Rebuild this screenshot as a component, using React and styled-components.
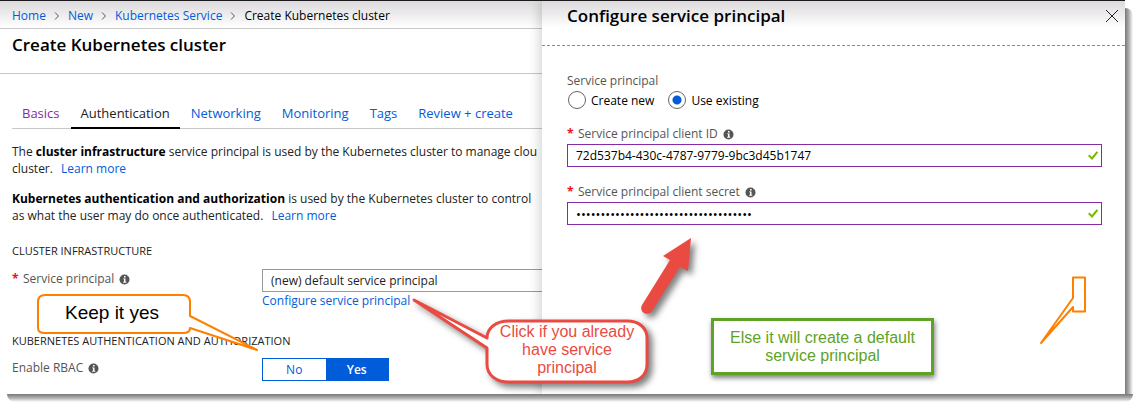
import React, { useState } from "react";
import styled, { createGlobalStyle } from "styled-components";

const Global = createGlobalStyle`
  * { box-sizing: border-box; }
  body { margin: 0; background: #fff; }
  body, button, input, select { font-family: "Open Sans", "Noto Sans", sans-serif; }
  p, h1, h2, h3, fieldset { margin: 0; padding: 0; border: 0; }
`;

const Frame = styled.div`
  position: relative;
  display: grid;
  grid-template-columns: 542fr 583fr;
  margin: 0 15px 15px 0;
  min-height: 394px;
  border-top: 1px solid #1b191b;
  background: #fff linear-gradient(#dcdadc, #fff 27px) no-repeat;
  font-size: 12px;
  color: #000;
  &::before, &::after {
    content: "";
    position: absolute;
  }
  &::before {
    left: 100%;
    top: 7px;
    bottom: 0;
    width: 8px;
    background: linear-gradient(90deg, #777, #b0b0b0 50%, #fff);
    border-radius: 0 8px 0 0;
  }
  &::after {
    top: 100%;
    left: 7px;
    right: -8px;
    height: 8px;
    background: linear-gradient(#777, #b0b0b0 50%, #fff);
    border-radius: 0 0 8px 8px;
  }
`;

const Main = styled.main`
  min-width: 0;
  overflow: hidden;
  white-space: nowrap;
`;

const Link = styled.a`
  color: #015cda;
  text-decoration: none;
`;

const Crumbs = styled.nav`
  display: flex;
  align-items: center;
  gap: 8px;
  height: 28px;
  padding: 1px 12px 0;
  border-bottom: 1px solid #c8c8c8;
  svg { margin-top: 1px; }
`;

const PageHead = styled.header`
  height: 45px;
  padding: 4px 12px;
  border-bottom: 1px solid #c8c8c8;
`;

const Title = styled.h1`
  font-size: 17px;
  line-height: 24px;
  font-weight: 600;
`;

const Tabs = styled.nav`
  display: flex;
  gap: 1px;
  margin: 26px 0 0 12px;
  border-bottom: 1px solid #c8c8c8;
`;

const Tab = styled.a`
  padding: 3px 10px 0;
  height: 29px;
  font-size: 13px;
  line-height: 20px;
  margin-bottom: -1px;
  text-decoration: none;
  color: ${(p) => (p.$state === "visited" ? "#852ba5" : p.$state === "active" ? "#222" : "#015cda")};
  border-bottom: 2px solid ${(p) => (p.$state === "active" ? "#000" : "transparent")};
`;

const Content = styled.div`
  padding: 14px 0 0 12px;
`;

const Para = styled.p`
  line-height: 17px;
  margin-bottom: 13px;
  color: #222;
  b { color: #000; }
  a { margin-left: 5px; }
`;

const Section = styled.h2`
  font-size: 11px;
  line-height: 16px;
  font-weight: 400;
  color: #222;
  margin-top: ${(p) => p.$gap || 0}px;
`;

const FormRow = styled.div`
  display: grid;
  grid-template-columns: 250px 1fr;
  margin-top: ${(p) => p.$gap}px;
`;

const Label = styled.label`
  display: flex;
  align-items: center;
  gap: 4px;
  height: 18px;
  color: #555;
  svg { margin: 2px 0 0 1px; }
`;

const Star = styled.span`
  width: 7px;
  font-weight: 700;
  color: #e81123;
`;

const PickerButton = styled.button`
  display: block;
  width: 100%;
  height: 23px;
  padding: 0 8px;
  border: 1px solid #999;
  border-right: 0;
  background: #fff;
  text-align: left;
  font-size: 12px;
  color: #222;
`;

const Toggle = styled.div`
  display: flex;
  width: 127px;
  height: 23px;
  border: 1px solid #015cda;
`;

const ToggleButton = styled.button`
  flex: 1;
  border: 0;
  padding: 0;
  font-size: 12px;
  font-weight: ${(p) => (p.$on ? 600 : 400)};
  color: ${(p) => (p.$on ? "#fff" : "#015cda")};
  background: ${(p) => (p.$on ? "#015cda" : "#fff")};
`;

const Blade = styled.aside`
  position: relative;
  min-width: 0;
  background: #fff linear-gradient(#dcdadc, #fff 27px) no-repeat;
  box-shadow: -3px 0 10px rgba(0, 0, 0, 0.16);
  clip-path: inset(0 0 0 -200px);
`;

const BladeHead = styled.header`
  display: flex;
  justify-content: space-between;
  align-items: flex-start;
  height: 45px;
  padding: 3px 7px 0 25px;
  border-bottom: 1px dashed #15b5e5;
`;

const CloseButton = styled.button`
  display: flex;
  margin-top: 6px;
  padding: 0;
  border: 0;
  background: none;
`;

const BladeForm = styled.form`
  padding: 26px 23px 0 25px;
`;

const Legend = styled.legend`
  padding: 0;
  line-height: 18px;
  color: #555;
`;

const Radios = styled.div`
  display: flex;
  gap: 13px;
`;

const RadioLabel = styled.label`
  display: flex;
  align-items: center;
  gap: 5px;
  height: 20px;
`;

const Radio = styled.input`
  appearance: none;
  width: 18px;
  height: 18px;
  margin: 0 0 0 1px;
  border: 1px solid #666;
  border-radius: 50%;
  background: #fff;
  &:checked { background: radial-gradient(circle, #015cda 4px, #fff 5px); }
`;

const Field = styled.div`
  margin-top: ${(p) => p.$gap}px;
`;

const InputBox = styled.div`
  display: flex;
  align-items: center;
  height: 23px;
  margin-top: 2px;
  padding: 0 3px 0 8px;
  border: 1px solid #852ba5;
  background: #fff;
`;

const TextInput = styled.input`
  flex: 1;
  min-width: 0;
  border: 0;
  padding: 0;
  outline: 0;
  background: none;
  font-size: ${(p) => (p.type === "password" ? 13 : 12)}px;
  color: #000;
`;

const Callout = styled.div`
  position: absolute;
  z-index: 2;
  left: ${(p) => p.$x}px;
  top: ${(p) => p.$y}px;
  width: ${(p) => p.$w}px;
  height: ${(p) => p.$h}px;
  pointer-events: none;
  svg { position: absolute; left: 0; top: 0; overflow: visible; }
`;

const RightCallout = styled(Callout)`
  left: auto;
  right: ${(p) => p.$right}px;
`;

const CalloutText = styled.p`
  position: absolute;
  left: ${(p) => p.$x}px;
  top: ${(p) => p.$y}px;
  width: ${(p) => p.$w}px;
  text-align: center;
  white-space: nowrap;
  font-family: "Liberation Sans", Arial, sans-serif;
  font-size: ${(p) => p.$size}px;
  line-height: 18px;
  color: ${(p) => p.$color};
`;

const Note = styled.div`
  position: absolute;
  left: 169px;
  top: 317px;
  width: 223px;
  height: 57px;
  padding-top: 8px;
  border: 3px solid #5ea226;
  background: #fff;
  box-shadow: 1px 3px 5px rgba(0, 0, 0, 0.5);
  font-family: "Liberation Sans", Arial, sans-serif;
  font-size: 16px;
  line-height: 18px;
  text-align: center;
  color: #5ea226;
`;

const Chevron = () => (
  <svg width="6" height="8" viewBox="0 0 6 8" fill="none" stroke="#555" aria-hidden="true">
    <path d="M1 .5 4.5 4 1 7.5" />
  </svg>
);

const Info = () => (
  <svg width="11" height="11" viewBox="0 0 11 11" aria-hidden="true">
    <circle cx="5.5" cy="5.5" r="5" fill="#555" />
    <path d="M5 2h1.6v1.5H5zM4.2 4.5h2.3v3.3h.8v.9H4.1v-.9h.9V5.3h-.8z" fill="#fff" />
  </svg>
);

const Check = () => (
  <svg width="10" height="9" viewBox="0 0 10 9" fill="none" stroke="#7ab800" strokeWidth="2" aria-hidden="true">
    <path d="M.7 4.2 4 7.4 9.4 .8" />
  </svg>
);

const Secret = "123456789012345678901234567890123456";

export default function App() {
  const [rbac, setRbac] = useState(true);
  return (
    <>
      <Global />
      <Frame>
        <Main>
          <Crumbs aria-label="Breadcrumb">
            <Link href="#home">Home</Link>
            <Chevron />
            <Link href="#new">New</Link>
            <Chevron />
            <Link href="#service">Kubernetes Service</Link>
            <Chevron />
            <span>Create Kubernetes cluster</span>
          </Crumbs>
          <PageHead>
            <Title>Create Kubernetes cluster</Title>
          </PageHead>
          <Tabs aria-label="Steps">
            <Tab href="#basics" $state="visited">Basics</Tab>
            <Tab href="#authentication" $state="active">Authentication</Tab>
            <Tab href="#networking">Networking</Tab>
            <Tab href="#monitoring">Monitoring</Tab>
            <Tab href="#tags">Tags</Tab>
            <Tab href="#review">Review + create</Tab>
          </Tabs>
          <Content>
            <Para>
              The <b>cluster infrastructure</b> service principal is used by the Kubernetes cluster to manage clou
              <br />
              cluster. <Link href="#learn-infrastructure">Learn more</Link>
            </Para>
            <Para>
              <b>Kubernetes authentication and authorization</b> is used by the Kubernetes cluster to control
              <br />
              as what the user may do once authenticated. <Link href="#learn-auth">Learn more</Link>
            </Para>
            <Section $gap={19}>CLUSTER INFRASTRUCTURE</Section>
            <FormRow $gap={10}>
              <Label htmlFor="principal">
                <Star>*</Star>Service principal <Info />
              </Label>
              <div>
                <PickerButton id="principal" type="button">(new) default service principal</PickerButton>
                <Link href="#configure">Configure service principal</Link>
              </div>
            </FormRow>
            <Section $gap={24}>KUBERNETES AUTHENTICATION AND AUTHORIZATION</Section>
            <FormRow $gap={9}>
              <Label as="span" id="rbac">Enable RBAC <Info /></Label>
              <Toggle role="group" aria-labelledby="rbac">
                <ToggleButton type="button" $on={!rbac} aria-pressed={!rbac} onClick={() => setRbac(false)}>No</ToggleButton>
                <ToggleButton type="button" $on={rbac} aria-pressed={rbac} onClick={() => setRbac(true)}>Yes</ToggleButton>
              </Toggle>
            </FormRow>
          </Content>
        </Main>
        <Blade>
          <BladeHead>
            <Title as="h2">Configure service principal</Title>
            <CloseButton type="button" aria-label="Close">
              <svg width="12" height="12" viewBox="0 0 12 12" stroke="#222" aria-hidden="true">
                <path d="M0 0 12 12M12 0 0 12" />
              </svg>
            </CloseButton>
          </BladeHead>
          <BladeForm>
            <fieldset>
              <Legend>Service principal</Legend>
              <Radios>
                <RadioLabel><Radio type="radio" name="mode" />Create new</RadioLabel>
                <RadioLabel><Radio type="radio" name="mode" defaultChecked />Use existing</RadioLabel>
              </Radios>
            </fieldset>
            <Field $gap={14}>
              <Label htmlFor="client-id"><Star>*</Star>Service principal client ID <Info /></Label>
              <InputBox>
                <TextInput id="client-id" defaultValue="72d537b4-430c-4787-9779-9bc3d45b1747" />
                <Check />
              </InputBox>
            </Field>
            <Field $gap={15}>
              <Label htmlFor="client-secret"><Star>*</Star>Service principal client secret <Info /></Label>
              <InputBox>
                <TextInput id="client-secret" type="password" autoComplete="off" defaultValue={Secret} />
                <Check />
              </InputBox>
            </Field>
          </BladeForm>
          <Callout $x={-130} $y={235} $w={285} $h={155}>
            <svg width="285" height="155" aria-hidden="true">
              <g filter="drop-shadow(4px 4px 3px rgba(0,0,0,.5))">
                <path
                  d="M2 64 75 102C75 92 84 85 97 85H215C227 85 235 92 235 102V128C235 139 227 146 215 146H97C84 146 75 139 75 128V112Z"
                  fill="#fff" stroke="#e94b43" strokeWidth="3" strokeLinejoin="round"
                />
                <path d="M279 2 251 20 258 24 230 69A5 5 0 0 0 240 75L268 31 276 35Z" fill="#e94b43" />
              </g>
            </svg>
            <CalloutText $x={75} $y={87} $w={160} $size={16} $color="#e94b43">
              Click if you already<br />have service<br />principal
            </CalloutText>
          </Callout>
          <Note>Else it will create a default<br />service principal</Note>
          <RightCallout $right={39} $y={275} $w={48} $h={70}>
            <svg width="48" height="70" aria-hidden="true">
              <path d="M35 1.500H47V35.500H35V31L3 67 35 22Z" fill="#fff" stroke="#ff8000" strokeWidth="2" strokeLinejoin="round" />
            </svg>
          </RightCallout>
        </Blade>
        <Callout $x={37} $y={292} $w={222} $h={60}>
          <svg width="222" height="60" aria-hidden="true">
            <path
              d="M8 2H146Q153 2 153 9V23L220 57 153 35Q153 40 146 40H8Q1 40 1 35V9Q1 2 8 2Z"
              fill="#fff" stroke="#ff8000" strokeWidth="2" strokeLinejoin="round"
            />
          </svg>
          <CalloutText $x={0} $y={11} $w={150} $size={19} $color="#000">Keep it yes</CalloutText>
        </Callout>
      </Frame>
    </>
  );
}
